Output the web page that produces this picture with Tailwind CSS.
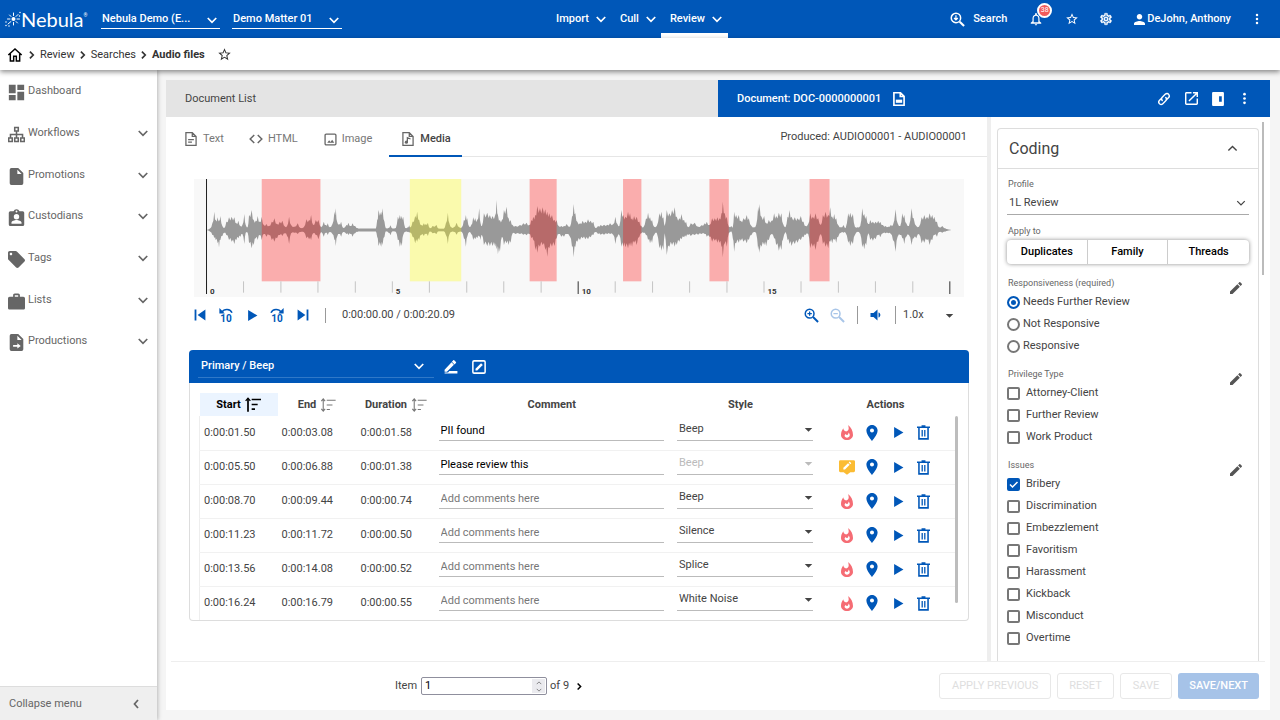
<!DOCTYPE html>
<html lang="en">
<head>
<meta charset="utf-8">
<meta name="viewport" content="width=device-width, initial-scale=1">
<title>Nebula - Audio files</title>
<script src="https://cdn.jsdelivr.net/npm/@tailwindcss/browser@4"></script>
</head>
<body class="flex h-screen min-h-[720px] flex-col overflow-hidden bg-[#f5f5f5] font-[Roboto,sans-serif] text-[11px] leading-4 text-[#444]">

<svg class="hidden" aria-hidden="true">
  <symbol id="down" viewBox="0 0 24 24"><path d="M3.500 8l8.500 8.500L20.500 8" fill="none" stroke="currentColor" stroke-width="3.400"/></symbol>
  <symbol id="down-thin" viewBox="0 0 24 24"><path d="M3 7.500l9 9 9-9" fill="none" stroke="currentColor" stroke-width="3"/></symbol>
  <symbol id="up" viewBox="0 0 24 24"><path d="M3 16.500l9-9 9 9" fill="none" stroke="currentColor" stroke-width="3"/></symbol>
  <symbol id="right" viewBox="0 0 24 24"><path d="M7 4l8 8-8 8" fill="none" stroke="currentColor" stroke-width="4"/></symbol>
  <symbol id="left" viewBox="0 0 24 24"><path d="M16 4l-7 8 7 8" fill="none" stroke="currentColor" stroke-width="3.500"/></symbol>
  <symbol id="caret" viewBox="0 0 24 24"><path d="M2 8h20L12 18z" fill="currentColor"/></symbol>
  <symbol id="home" viewBox="0 0 24 24"><path d="M2 12L12 3l10 9M5 10v11h5v-7h4v7h5V10" fill="none" stroke="currentColor" stroke-width="2.200"/></symbol>
  <symbol id="star" viewBox="0 0 24 24"><path d="M22 9.240l-7.190-.620L12 2 9.190 8.630 2 9.240l5.460 4.730L5.820 21 12 17.270 18.180 21l-1.630-7.030L22 9.240zM12 15.400l-3.760 2.270 1-4.280-3.320-2.880 4.380-.380L12 6.100l1.710 4.040 4.380.380-3.320 2.880 1 4.280L12 15.400z" fill="currentColor"/></symbol>
  <symbol id="bell" viewBox="0 0 24 24"><path d="M12 23c1.100 0 2-.9 2-2h-4c0 1.100.9 2 2 2zm6-7v-5c0-3.070-1.630-5.640-4.500-6.320V3c0-.83-.67-1.500-1.500-1.500s-1.500.67-1.500 1.500v1.680C7.640 5.360 6 7.920 6 11v5l-3 2.500V20h18v-1.500L18 16zm-2 1.500H8V11c0-2.480 1.510-4.500 4-4.500s4 2.020 4 4.500v6.500z" fill="currentColor"/></symbol>
  <symbol id="cog" viewBox="0 0 24 24"><path fill="currentColor" stroke="currentColor" stroke-width=".6" d="M12,8A4,4 0 0,1 16,12A4,4 0 0,1 12,16A4,4 0 0,1 8,12A4,4 0 0,1 12,8M12,10A2,2 0 0,0 10,12A2,2 0 0,0 12,14A2,2 0 0,0 14,12A2,2 0 0,0 12,10M10,22C9.750,22 9.540,21.820 9.500,21.580L9.130,18.930C8.500,18.680 7.960,18.340 7.440,17.940L4.950,18.950C4.730,19.030 4.460,18.950 4.340,18.730L2.340,15.270C2.210,15.050 2.270,14.780 2.460,14.630L4.570,12.970L4.500,12L4.570,11L2.460,9.370C2.270,9.220 2.210,8.950 2.340,8.730L4.340,5.270C4.460,5.050 4.730,4.960 4.950,5.050L7.440,6.050C7.960,5.660 8.500,5.320 9.130,5.070L9.500,2.420C9.540,2.180 9.750,2 10,2H14C14.250,2 14.460,2.180 14.500,2.420L14.870,5.070C15.500,5.320 16.040,5.660 16.560,6.050L19.050,5.050C19.270,4.960 19.540,5.050 19.660,5.270L21.660,8.730C21.790,8.950 21.730,9.220 21.540,9.370L19.430,11L19.500,12L19.430,13L21.540,14.630C21.730,14.780 21.790,15.050 21.660,15.270L19.660,18.730C19.540,18.950 19.270,19.040 19.050,18.950L16.560,17.950C16.040,18.340 15.500,18.680 14.870,18.930L14.500,21.580C14.460,21.820 14.250,22 14,22H10M11.250,4L10.880,6.610C9.680,6.860 8.620,7.500 7.850,8.390L5.440,7.350L4.690,8.650L6.800,10.200C6.400,11.370 6.400,12.640 6.800,13.800L4.680,15.360L5.430,16.660L7.860,15.620C8.630,16.500 9.680,17.140 10.870,17.380L11.240,20H12.760L13.130,17.390C14.320,17.140 15.370,16.500 16.140,15.620L18.570,16.660L19.320,15.360L17.200,13.810C17.600,12.640 17.600,11.370 17.200,10.200L19.310,8.650L18.560,7.350L16.150,8.390C15.380,7.500 14.320,6.860 13.120,6.620L12.750,4H11.250Z"/></symbol>
  <symbol id="person" viewBox="4 4 16 16"><path d="M12 12c2.210 0 4-1.790 4-4s-1.790-4-4-4-4 1.790-4 4 1.790 4 4 4zm0 2c-2.670 0-8 1.340-8 4v2h16v-2c0-2.660-5.330-4-8-4z" fill="currentColor"/></symbol>
  <symbol id="dots" viewBox="0 0 24 24"><g fill="currentColor"><circle cx="12" cy="4" r="2.500"/><circle cx="12" cy="12" r="2.500"/><circle cx="12" cy="20" r="2.500"/></g></symbol>
  <symbol id="find" viewBox="0 0 24 24"><g fill="none" stroke="currentColor"><circle cx="9.500" cy="9.500" r="7.500" stroke-width="2.400"/><path d="M15.500 15.500l7 7" stroke-width="3.400"/><path d="M9.500 5v7M6.500 9.500l3 3 3-3" stroke-width="2"/></g></symbol>
  <symbol id="zoom-in" viewBox="0 0 24 24"><g fill="none" stroke="currentColor"><circle cx="9" cy="9" r="7" stroke-width="2.400"/><path d="M14.500 14.500l8 8" stroke-width="3.200"/><path d="M9 5.500v7M5.500 9h7" stroke-width="2"/></g></symbol>
  <symbol id="zoom-out" viewBox="0 0 24 24"><g fill="none" stroke="currentColor"><circle cx="9" cy="9" r="7" stroke-width="2.400"/><path d="M14.500 14.500l8 8" stroke-width="3.200"/><path d="M5.500 9h7" stroke-width="2"/></g></symbol>
  <symbol id="dashboard" viewBox="2 2 20 20"><path d="M3 13h8V3H3v10zm0 8h8v-6H3v6zm10 0h8V11h-8v10zm0-18v6h8V3h-8z" fill="currentColor"/></symbol>
  <symbol id="tree" viewBox="0 0 24 24"><g fill="none" stroke="currentColor" stroke-width="2.200"><path d="M9.500 2h5v5h-5zM1 17h5v5H1zM9.500 17h5v5h-5zM18 17h5v5h-5zM12 7v10M3.500 17v-5h17v5"/></g></symbol>
  <symbol id="file" viewBox="4 2 16 20"><path d="M6 2a2 2 0 0 0-2 2v16a2 2 0 0 0 2 2h12a2 2 0 0 0 2-2V8l-6-6zm7 2l5 5h-5z" fill="currentColor"/></symbol>
  <symbol id="badge" viewBox="2 0 20 22"><path fill-rule="evenodd" fill="currentColor" d="M4 3h4.200a4 4 0 0 1 7.600 0H20a2 2 0 0 1 2 2v15a2 2 0 0 1-2 2H4a2 2 0 0 1-2-2V5a2 2 0 0 1 2-2zm8-1a1.200 1.200 0 1 0 0 2.400A1.200 1.200 0 0 0 12 2zm0 4.500a3.500 3.500 0 1 0 0 7 3.500 3.500 0 0 0 0-7zM5.500 19h13v-1.500c0-2-4.200-3.200-6.500-3.200s-6.500 1.200-6.500 3.200z"/></symbol>
  <symbol id="tag" viewBox="2 2 20 20"><path d="M21.410 11.580l-9-9C12.050 2.220 11.550 2 11 2H4c-1.100 0-2 .9-2 2v7c0 .55.220 1.050.590 1.420l9 9c.36.36.86.580 1.410.580s1.050-.220 1.410-.590l7-7c.370-.36.590-.86.590-1.410s-.230-1.060-.590-1.420zM5.500 7C4.670 7 4 6.330 4 5.500S4.670 4 5.500 4 7 4.670 7 5.500 6.330 7 5.500 7z" fill="currentColor"/></symbol>
  <symbol id="case" viewBox="2 2 20 19"><path d="M20 6h-4V4c0-1.110-.89-2-2-2h-4c-1.110 0-2 .89-2 2v2H4c-1.110 0-2 .89-2 2v11c0 1.110.89 2 2 2h16c1.110 0 2-.89 2-2V8c0-1.110-.89-2-2-2zm-6 0h-4V4h4v2z" fill="currentColor"/></symbol>
  <symbol id="file-out" viewBox="4 2 16 20"><path fill-rule="evenodd" d="M6 2a2 2 0 0 0-2 2v16a2 2 0 0 0 2 2h12a2 2 0 0 0 2-2V8l-6-6zm7 2l5 5h-5zM8 15h5v-2l4 3-4 3v-2H8z" fill="currentColor"/></symbol>
  <symbol id="doc-text" viewBox="3 1 18 22"><g fill="none" stroke="currentColor" stroke-width="2"><path d="M5 2h9l6 6v14H4V2zM14 2v6h6M7.500 13h9M7.500 17h6"/></g></symbol>
  <symbol id="doc-image" viewBox="3 1 18 22"><path d="M5 2h9l6 6v14H4V2zM14 2v6h6" fill="none" stroke="currentColor" stroke-width="2.600"/><path d="M7 13h10v5H7z" fill="currentColor"/></symbol>
  <symbol id="code" viewBox="0 0 24 24"><path d="M9 5l-7 7 7 7M15 5l7 7-7 7" fill="none" stroke="currentColor" stroke-width="2.500"/></symbol>
  <symbol id="image" viewBox="0 0 24 24"><rect x="2" y="2" width="20" height="20" rx="2" fill="none" stroke="currentColor" stroke-width="2.400"/><path d="M6 18l3.500-4.500 2.500 3 3-4 4 5.500z" fill="currentColor"/></symbol>
  <symbol id="doc-music" viewBox="3 1 18 22"><path d="M4 2h10l6 6v14H4zM14 2v6h6M11 17V10l5 2" fill="none" stroke="currentColor" stroke-width="2"/><circle cx="9.500" cy="17" r="2.500" fill="currentColor"/></symbol>
  <symbol id="link" viewBox="0 0 24 24"><g fill="none" stroke="currentColor" stroke-width="2.400" stroke-linecap="round"><path d="M9 14.500c-2-2-1.500-4 0-5.500l5-5c2-2 4.500-2 6 0s1.500 4 0 5.500l-2.500 2.500"/><path d="M15 9.500c2 2 1.500 4 0 5.500l-5 5c-2 2-4.500 2-6 0s-1.500-4 0-5.500L6.500 12"/></g></symbol>
  <symbol id="open" viewBox="3 3 18 18"><path d="M19 19H5V5h7V3H5c-1.110 0-2 .9-2 2v14c0 1.100.89 2 2 2h14c1.100 0 2-.9 2-2v-7h-2v7zM14 3v2h3.590l-9.830 9.830 1.410 1.410L19 6.410V10h2V3h-7z" fill="currentColor"/></symbol>
  <symbol id="pane" viewBox="0 0 22 26"><path fill-rule="evenodd" d="M2 0h18a2 2 0 0 1 2 2v22a2 2 0 0 1-2 2H2a2 2 0 0 1-2-2V2a2 2 0 0 1 2-2zm11 8v10h5V8z" fill="currentColor"/></symbol>
  <symbol id="prev" viewBox="0 0 20 20"><path d="M1 1h3v18H1zM19 1v18L6 10z" fill="currentColor"/></symbol>
  <symbol id="next" viewBox="0 0 20 20"><path d="M16 1h3v18h-3zM1 1v18l13-9z" fill="currentColor"/></symbol>
  <symbol id="play" viewBox="0 0 20 20"><path d="M2 0v20l17-10z" fill="currentColor"/></symbol>
  <symbol id="arc-back" viewBox="0 0 24 10"><path d="M5 7c4-6 14-6 17 1" fill="none" stroke="currentColor" stroke-width="2.600"/><path d="M1 0v9h9z" fill="currentColor"/></symbol>
  <symbol id="arc-fwd" viewBox="0 0 24 10"><path d="M19 7C15 1 5 1 2 8" fill="none" stroke="currentColor" stroke-width="2.600"/><path d="M23 0v9h-9z" fill="currentColor"/></symbol>
  <symbol id="speaker" viewBox="0 0 24 24"><path d="M1 8v8h6l8 7V1L7 8zM17 7v10c5-1 5-9 0-10z" fill="currentColor"/></symbol>
  <symbol id="edit-line" viewBox="0 0 24 24"><path d="M1 16.500V20h4l12-12-4-4zM20.500 5c.5-.5.500-1 0-1.500L17.500.5c-.5-.5-1-.5-1.500 0l-2.500 2.500L18 7.500zM9 19h14v4H1v-1.500h6z" fill="currentColor"/></symbol>
  <symbol id="edit-box" viewBox="0 0 24 24"><rect x="1.500" y="1.500" width="21" height="21" rx="2" fill="none" stroke="currentColor" stroke-width="2.600"/><path d="M6 18v-3l9.500-9.500 3 3L9 18z" fill="currentColor"/></symbol>
  <symbol id="sort" viewBox="0 0 24 22"><g fill="none" stroke="currentColor"><path d="M4.500 2v20" stroke-width="2.600"/><path d="M1 5.500l3.500-4 3.500 4" stroke-width="2"/><path d="M10 3.500h14M10 11h9M10 18h5" stroke-width="2.400"/></g></symbol>
  <symbol id="sort-both" viewBox="0 0 24 22"><g fill="none" stroke="currentColor"><path d="M4.500 2v18M1.500 5l3-3.500 3 3.500M1.500 17l3 3.500 3-3.500" stroke-width="1.700"/><path d="M10 3.500h14M10 11h9M10 18h5" stroke-width="1.700"/></g></symbol>
  <symbol id="fire" viewBox="4 .67 16 20"><path fill-rule="evenodd" d="M13.500.67s.740 2.650.740 4.800c0 2.060-1.350 3.730-3.410 3.730-2.070 0-3.630-1.670-3.630-3.730l.030-.36C5.210 7.510 4 10.620 4 14c0 3.900 3.580 6.670 8 6.670s8-2.770 8-6.670C20 8.610 17.410 3.800 13.500.67zM12 17.600c-1.900 0-3.200-1-3.200-2.500 0-1.200.8-2 1.900-2.400 0 1.300 1.100 1.900 2.200 1.100.9-.7 1.200-1.700 1.100-3 1.300 1.200 1.900 2.500 1.600 3.900-.4 1.800-1.800 2.900-3.600 2.900z" fill="currentColor"/></symbol>
  <symbol id="comment-edit" viewBox="0 0 24 22"><path d="M2 0h20a2 2 0 0 1 2 2v14a2 2 0 0 1-2 2h-5l-5 4-5-4H2a2 2 0 0 1-2-2V2a2 2 0 0 1 2-2z" fill="#fbbc33"/><path d="M6.500 14v-2.500l7-7 2.500 2.500-7 7zM14.500 3.500L16 2l2.500 2.500L17 6z" fill="#fff"/></symbol>
  <symbol id="pin" viewBox="5 2 14 20"><path d="M12 2C8.130 2 5 5.130 5 9c0 5.250 7 13 7 13s7-7.750 7-13c0-3.870-3.130-7-7-7zm0 9.500c-1.380 0-2.500-1.120-2.500-2.500s1.120-2.500 2.500-2.500 2.500 1.120 2.500 2.500-1.120 2.500-2.500 2.500z" fill="currentColor"/></symbol>
  <symbol id="trash" viewBox="0 0 20 22"><g fill="none" stroke="currentColor" stroke-width="2.400"><path d="M0 3h20M7 1.200h6M3 3v17.800h14V3"/><path d="M8 7v10M12 7v10" stroke-width="2"/></g></symbol>
  <symbol id="pencil" viewBox="3 3 18 18"><path d="M3 17.250V21h3.750L17.810 9.940l-3.750-3.750L3 17.250zM20.710 7.040c.390-.390.390-1.020 0-1.410l-2.340-2.340c-.390-.390-1.020-.390-1.410 0l-1.830 1.830 3.750 3.750 1.830-1.830z" fill="currentColor"/></symbol>
</svg>

<header class="flex h-[38px] shrink-0 items-center bg-[#0057b8] text-white">
  <div class="flex h-full flex-1 items-center">
    <a href="#" class="ml-[5px] flex w-[84px] items-center" aria-label="Nebula home">
      <svg class="size-4 shrink-0" viewBox="0 0 32 32" fill="currentColor"><circle cx="17" cy="16" r="4"/><g stroke="currentColor" stroke-width="2" stroke-linecap="round"><path d="M17 9V4M17 23v5M24 16h5M10 16H5M22 11l4-4M12 21l-6 5M12 11L9 8M22 21l3 3"/></g><circle cx="2" cy="29" r="1.500"/><circle cx="2" cy="22" r="1.500"/><circle cx="8" cy="30" r="1.500"/><circle cx="30" cy="3" r="1.500"/><circle cx="29" cy="10" r="1.500"/></svg>
      <span class="font-[Lato,sans-serif] text-[20px] leading-6">Nebula</span><span class="mb-2 text-[5px]">®</span>
    </a>
    <div class="relative ml-3 w-[119px] border-b border-white">
      <select aria-label="Workspace" class="block h-[19px] w-full appearance-none truncate pl-px pr-5 font-medium"><option>Nebula Demo (E...</option></select>
      <svg class="pointer-events-none absolute right-[2px] top-[5px] size-3"><use href="#down"/></svg>
    </div>
    <div class="relative ml-3 w-[110px] border-b border-white">
      <select aria-label="Matter" class="block h-[19px] w-full appearance-none truncate pl-px pr-5 font-medium"><option>Demo Matter 01</option></select>
      <svg class="pointer-events-none absolute right-[2px] top-[5px] size-3"><use href="#down"/></svg>
    </div>
  </div>
  <nav class="mr-[5px] flex h-full font-medium">
    <a href="#" class="flex items-center gap-[6px] pl-[9px] pr-1">Import<svg class="size-3"><use href="#down"/></svg></a>
    <a href="#" class="flex items-center gap-[6px] pl-[9px] pr-1">Cull<svg class="size-3"><use href="#down"/></svg></a>
    <a href="#" class="flex items-center gap-[6px] border-b-[5px] border-white pl-[9px] pr-[5px] pt-[5px]" aria-current="page">Review<svg class="size-3"><use href="#down"/></svg></a>
  </nav>
  <div class="flex h-full flex-1 items-center justify-end">
    <button class="flex items-center gap-2 font-medium"><svg class="size-[15px]"><use href="#find"/></svg>Search</button>
    <button class="relative ml-[22px]" aria-label="Notifications"><svg class="size-[14px]"><use href="#bell"/></svg><span class="absolute -right-[9px] -top-[9px] flex size-[15px] items-center justify-center rounded-full border-2 border-white bg-[#f25c5c] text-[7px] leading-none">38</span></button>
    <button class="ml-[22px]" aria-label="Favorites"><svg class="size-[14px]"><use href="#star"/></svg></button>
    <button class="ml-5" aria-label="Settings"><svg class="size-[14px]"><use href="#cog"/></svg></button>
    <button class="ml-[21px] flex items-center gap-[2px] font-medium"><svg class="size-[11px]"><use href="#person"/></svg>DeJohn, Anthony</button>
    <button class="ml-5 mr-[17px]" aria-label="More"><svg class="size-[12px]"><use href="#dots"/></svg></button>
  </div>
</header>

<nav class="relative z-10 flex h-8 shrink-0 items-center bg-white pl-[7px] pb-px pt-[2px] text-[#333] shadow-[0_2px_5px_rgba(0,0,0,0.45)]" aria-label="Breadcrumb">
  <a href="#" aria-label="Home"><svg class="size-4 text-black"><use href="#home"/></svg></a>
  <svg class="ml-1 mr-[3px] size-[10px]"><use href="#right"/></svg><a href="#">Review</a>
  <svg class="mx-[3px] size-[10px]"><use href="#right"/></svg><a href="#">Searches</a>
  <svg class="mx-[3px] size-[10px]"><use href="#right"/></svg><a href="#" class="font-bold">Audio files</a>
  <button class="ml-3" aria-label="Add to favorites"><svg class="size-[15px]"><use href="#star"/></svg></button>
</nav>

<div class="flex min-h-0 flex-1">
  <aside class="flex w-[157px] shrink-0 flex-col bg-white text-[#666] shadow-[1px_0_4px_rgba(0,0,0,0.25)]">
    <nav id="menu" class="flex-1"></nav>
    <button class="flex h-[34px] items-center justify-between border-t border-[#ddd] bg-[#efefef] pl-[9px] pr-[15px] pt-px">Collapse menu<svg class="size-3"><use href="#left"/></svg></button>
  </aside>

  <main class="mb-[10px] ml-[9px] mr-[10px] mt-[10px] flex min-w-0 flex-1 flex-col bg-white">
    <div class="flex h-[37px] shrink-0">
      <button class="flex flex-1 items-center bg-[#e4e4e4] px-[19px]">Document List</button>
      <div class="flex flex-1 items-center bg-[#0057b8] pl-[19px] pr-[19px] text-white">
        <span class="font-medium">Document: DOC-0000000001</span>
        <svg class="ml-3 h-[14px] w-3"><use href="#doc-image"/></svg>
        <div class="ml-auto flex items-center gap-[14px]">
          <button aria-label="Copy link"><svg class="size-[14px]"><use href="#link"/></svg></button>
          <button aria-label="Open in new window"><svg class="size-[13px]"><use href="#open"/></svg></button>
          <button aria-label="Toggle coding pane"><svg class="h-[14px] w-3"><use href="#pane"/></svg></button>
          <button aria-label="More options"><svg class="size-[13px]"><use href="#dots"/></svg></button>
        </div>
      </div>
    </div>

    <div class="flex min-h-0 flex-1">
      <section class="flex min-w-0 flex-1 flex-col overflow-hidden">
        <div class="flex h-10 shrink-0 pl-[6px]" role="tablist">
          <button role="tab" class="flex items-center gap-[6px] px-[13px] pt-1 text-[#777]"><svg class="h-[14px] w-3 text-[#666]"><use href="#doc-text"/></svg>Text</button>
          <button role="tab" class="flex items-center gap-[5px] px-3 pt-1 text-[#777]"><svg class="size-[14px] text-[#666]"><use href="#code"/></svg>HTML</button>
          <button role="tab" class="flex items-center gap-[5px] px-[14px] pt-1 text-[#777]"><svg class="size-[13px] text-[#666]"><use href="#image"/></svg>Image</button>
          <button role="tab" aria-selected="true" class="ml-[3px] flex items-center gap-[6px] border-b-2 border-[#0057b8] pl-[13px] pr-[11px] pt-[6px] font-medium"><svg class="h-[14px] w-3 text-[#666]"><use href="#doc-music"/></svg>Media</button>
          <div class="flex flex-1 items-center justify-end border-b border-[#e6e6e6] pr-5">Produced: AUDIO00001 - AUDIO00001</div>
        </div>

        <div class="relative ml-[28px] mr-[23px] mt-[22px] h-[118px] shrink-0 bg-[#f8f8f8]">
          <svg id="wave" class="block h-full w-full" viewBox="73 177 2308 354" preserveAspectRatio="none"></svg>
          <div id="labels" class="text-[8px] font-bold leading-none text-[#333]"></div>
        </div>

        <div class="ml-[28px] mr-[23px] mt-[6px] flex h-6 shrink-0 items-center text-[#0057b8]">
          <button aria-label="To start"><svg class="size-3"><use href="#prev"/></svg></button>
          <button aria-label="Back 10 seconds" class="ml-3 flex w-4 flex-col items-center"><svg class="h-[6px] w-4"><use href="#arc-back"/></svg><span class="text-[10px] font-bold leading-[9px]">10</span></button>
          <button aria-label="Play" class="ml-[13px]"><svg class="size-[11px]"><use href="#play"/></svg></button>
          <button aria-label="Forward 10 seconds" class="ml-[11px] flex w-4 flex-col items-center"><svg class="h-[6px] w-4"><use href="#arc-fwd"/></svg><span class="text-[10px] font-bold leading-[9px]">10</span></button>
          <button aria-label="To end" class="ml-[12px]"><svg class="size-3"><use href="#next"/></svg></button>
          <span class="ml-4 h-[15px] w-px bg-[#999]"></span>
          <span class="ml-4 text-[#444]">0:00:00.00 / 0:00:20.09</span>
          <button aria-label="Zoom in" class="ml-auto"><svg class="size-[15px]"><use href="#zoom-in"/></svg></button>
          <button aria-label="Zoom out" class="ml-[11px] text-[#a8c5e8]" disabled><svg class="size-[15px]"><use href="#zoom-out"/></svg></button>
          <span class="ml-3 h-[18px] w-px bg-[#999]"></span>
          <button aria-label="Volume" class="ml-3"><svg class="size-3"><use href="#speaker"/></svg></button>
          <span class="ml-[13px] h-[18px] w-px bg-[#999]"></span>
          <span class="relative ml-[7px] w-[61px] text-[#444]"><select aria-label="Speed" class="block w-full appearance-none pr-4"><option>1.0x</option></select><svg class="pointer-events-none absolute right-[10px] top-1 size-[9px]"><use href="#caret"/></svg></span>
        </div>

        <div class="ml-[23px] mr-[18px] mt-[23px] shrink-0 rounded-sm border border-t-0 border-[#ddd]">
          <div class="-mx-px flex h-[33px] items-center rounded-t-sm bg-[#0057b8] pl-[9px] text-white">
            <div class="relative w-[236px] border-b border-[#2f78c8]">
              <select aria-label="Redaction set" class="block h-[21px] w-full appearance-none pb-px pl-[3px] font-medium"><option>Primary / Beep</option></select>
              <svg class="pointer-events-none absolute right-[9px] top-1 size-3"><use href="#down"/></svg>
            </div>
            <button aria-label="Edit" class="ml-[10px]"><svg class="size-[14px]"><use href="#edit-line"/></svg></button>
            <button aria-label="Edit set" class="ml-[14px]"><svg class="size-[14px]"><use href="#edit-box"/></svg></button>
          </div>
          <div class="relative ml-[9px] mr-[10px] mt-[10px]">
            <table class="w-full table-fixed border-collapse">
              <colgroup><col class="w-[78px]"><col class="w-[79px]"><col class="w-[79px]"><col><col class="w-[145px]"><col class="w-[145px]"></colgroup>
              <thead>
                <tr class="h-[23px]">
                  <th class="bg-[#ebf4ff] p-0 text-black"><button class="mx-auto flex items-center gap-1">Start<svg class="h-[15px] w-4"><use href="#sort"/></svg></button></th>
                  <th class="p-0"><button class="mx-auto flex items-center gap-1">End<svg class="h-[14px] w-4 text-[#777]"><use href="#sort-both"/></svg></button></th>
                  <th class="p-0"><button class="mx-auto flex items-center gap-1">Duration<svg class="h-[14px] w-4 text-[#777]"><use href="#sort-both"/></svg></button></th>
                  <th class="p-0">Comment</th><th class="p-0">Style</th><th class="p-0">Actions</th>
                </tr>
              </thead>
              <tbody id="rows" class="border-l border-[#eee]"></tbody>
            </table>
            <span class="absolute right-0 top-[23px] h-[187px] w-[3px] rounded bg-[#bdbdbd]"></span>
          </div>
        </div>
      </section>

      <section class="relative w-[283px] shrink-0 overflow-hidden border-l-4 border-[#eee] pl-[6px] pr-[11px] pt-[11px]">
        <div class="h-full rounded-t-sm border border-b-0 border-[#ddd]">
          <div class="flex h-10 items-center justify-between border-b border-[#ddd] pl-[11px] pr-5"><h2 class="text-base">Coding</h2><button aria-label="Collapse coding"><svg class="size-[11px]"><use href="#up"/></svg></button></div>
          <div class="px-[9px] pt-[7px]">
            <label for="profile" class="block px-px text-[9px] leading-4 text-[#666]">Profile</label>
            <div class="relative border-b border-[#aaa]">
              <select id="profile" class="block h-[22px] w-full appearance-none pl-[2px]"><option>1L Review</option></select>
              <svg class="pointer-events-none absolute right-[3px] top-[6px] size-[10px]"><use href="#down-thin"/></svg>
            </div>
            <div class="mt-2 px-px text-[9px] leading-4 text-[#666]">Apply to</div>
            <div class="mt-px grid grid-cols-3 divide-x divide-[#ccc] rounded-sm font-medium text-black shadow-[0_0_4px_rgba(0,0,0,0.45)]">
              <button class="h-6">Duplicates</button><button class="h-6">Family</button><button class="h-6">Threads</button>
            </div>
            <div id="groups" class="pt-3"></div>
          </div>
        </div>
        <span class="absolute right-[6px] top-[5px] h-[153px] w-[2px] bg-[#bbb]"></span>
      </section>
    </div>

    <footer class="mx-[5px] flex h-[49px] shrink-0 items-center border-t border-[#eee] pr-[6px]">
      <div class="flex flex-1 items-center pl-[224px]">
        <label for="item" class="mr-1">Item</label>
        <span class="flex h-[18px] w-[126px] rounded-xs border border-[#8f8f9d] bg-white p-px">
          <input id="item" type="number" value="1" class="min-w-0 flex-1 appearance-none pl-[2px] text-black [-moz-appearance:textfield] [&::-webkit-inner-spin-button]:appearance-none">
          <span class="flex w-[13px] flex-col items-center justify-center gap-px bg-[#ebebef] text-[#666]">
            <button aria-label="Increase"><svg class="block size-[6px]"><use href="#up"/></svg></button>
            <button aria-label="Decrease"><svg class="block size-[6px]"><use href="#down-thin"/></svg></button>
          </span>
        </span>
        <span class="ml-[3px]">of 9</span>
        <button aria-label="Next item" class="ml-[6px]"><svg class="size-[9px] text-black"><use href="#right"/></svg></button>
      </div>
      <div class="flex gap-[6px] text-[#dedede]">
        <button class="h-[26px] rounded-[3px] border border-[#e8e8e8] px-3" disabled>APPLY PREVIOUS</button>
        <button class="h-[26px] rounded-[3px] border border-[#e8e8e8] px-[11px]" disabled>RESET</button>
        <button class="h-[26px] rounded-[3px] border border-[#e8e8e8] px-3" disabled>SAVE</button>
        <button class="h-[26px] rounded-[3px] bg-[#a6c3e8] px-[11px] font-medium text-white">SAVE/NEXT</button>
      </div>
    </footer>
  </main>
</div>

<script>
const icon = (id, cls) => `<svg class="${cls}"><use href="#${id}"/></svg>`;

// Side menu
document.getElementById('menu').innerHTML = [
  ['Dashboard','dashboard'],['Workflows','tree'],['Promotions','file'],['Custodians','badge'],
  ['Tags','tag'],['Lists','case'],['Productions','file-out']
].map(([name, id], i) => `<a href="#" class="flex h-[42px] items-center px-2 nth-[3n]:-mb-px">${icon(id, 'mt-[2px] mr-[3px] size-[17px] shrink-0')}<span class="flex-1">${name}</span>${i ? icon('down', 'size-3') : ''}</a>`).join('');

// Regions with their comments
document.getElementById('rows').innerHTML = [
  ['0:00:01.50','0:00:03.08','0:00:01.58','PII found','Beep'],
  ['0:00:05.50','0:00:06.88','0:00:01.38','Please review this','Beep'],
  ['0:00:08.70','0:00:09.44','0:00:00.74','','Beep'],
  ['0:00:11.23','0:00:11.72','0:00:00.50','','Silence'],
  ['0:00:13.56','0:00:14.08','0:00:00.52','','Splice'],
  ['0:00:16.24','0:00:16.79','0:00:00.55','','White Noise']
].map(([a, b, c, text, style], i) => {
  const note = i === 1;
  return `<tr class="h-[34px] border-b border-[#f1f1f1] last:border-0">
    <td class="p-0 pl-1">${a}</td><td class="p-0 pl-1">${b}</td><td class="p-0 pl-1">${c}</td>
    <td class="py-0 pl-[3px] pr-1"><input aria-label="Comment ${i + 1}" value="${text}" placeholder="Add comments here" class="mb-1 block h-5 w-full border-b border-[#bbb] pl-[2px] text-black placeholder:text-[#777]"></td>
    <td class="p-0 pl-[9px]"><div class="relative mb-1"><select aria-label="Style ${i + 1}" ${note ? 'disabled' : ''} class="block h-5 w-full appearance-none border-b border-[#bbb] pb-[3px] pl-[2px] disabled:text-[#bbb] disabled:opacity-100"><option>${style}</option></select>${icon('caret', note ? 'pointer-events-none absolute right-0 top-1 size-[9px] text-[#bbb]' : 'pointer-events-none absolute right-0 top-1 size-[9px]')}</div></td>
    <td class="p-0 pl-[25px]"><div class="flex items-center text-[#0057b8]">
      <button aria-label="Apply" class="flex w-[18px] justify-center text-[#f56c74]">${note ? icon('comment-edit', 'h-[15px] w-4') : icon('fire', 'h-[15px] w-3')}</button>
      <button aria-label="Locate" class="ml-[10px] flex w-3 justify-center">${icon('pin', 'h-4 w-3')}</button>
      <button aria-label="Play region" class="ml-[15px]">${icon('play', 'size-[11px]')}</button>
      <button aria-label="Delete" class="ml-[13px]">${icon('trash', 'h-[15px] w-[13px]')}</button>
    </div></td></tr>`;
}).join('');

// Coding fields
document.getElementById('groups').innerHTML = [
  ['Responsiveness (required)','radio',['Needs Further Review','Not Responsive','Responsive']],
  ['Privilege Type','checkbox',['Attorney-Client','Further Review','Work Product']],
  ['Issues','checkbox',['Bribery','Discrimination','Embezzlement','Favoritism','Harassment','Kickback','Misconduct','Overtime']]
].map(([title, type, opts], g) => `<fieldset class="relative mb-[10px]">
  <legend class="block px-px text-[9px] leading-[15px] text-[#666]">${title}</legend>
  <button aria-label="Edit ${title}" class="absolute right-[7px] -top-[9px] text-[#555]">${icon('pencil', 'size-3')}</button>
  ${opts.map((o, i) => {
    const on = i === 0 && g !== 1 ? 'checked' : '';
    return type === 'radio'
    ? `<label class="flex h-[22px] items-center gap-[3px]"><input type="radio" name="g${g}" ${on} class="size-[13px] appearance-none rounded-full border-2 border-[#777] checked:border-[#0057b8] checked:bg-[#0057b8] checked:shadow-[inset_0_0_0_2px_white]">${o}</label>`
    : `<label class="flex h-[22px] items-center"><span class="relative mr-[6px] size-[13px]"><input type="checkbox" ${on} class="peer block size-[13px] appearance-none rounded-xs border-2 border-[#777] checked:border-[#0057b8] checked:bg-[#0057b8]"><svg viewBox="0 0 13 13" class="pointer-events-none absolute inset-0 hidden peer-checked:block"><path d="M3 6.500l2.500 2.500L10.500 4" fill="none" stroke="#fff" stroke-width="1.500"/></svg></span>${o}</label>`;
  }).join('')}</fieldset>`).join('');

// Waveform envelope: x, height above the axis, height below it
const first = '110,0,0 122,5,5 128,20,15 134,55,25 138,30,30 144,38,40 148,30,52 152,42,30 158,12,18 164,6,8 170,25,15 178,38,30 186,40,35 194,38,42 200,20,30 206,28,25 212,12,20 218,15,12 224,48,42 228,15,8 234,8,8 238,45,40 246,60,55 252,30,45 258,28,25 264,42,30 270,25,15 276,40,30 282,15,12 290,18,20 298,12,15 306,25,30 314,35,35 322,18,25 330,25,15 338,28,18 346,10,10 352,12,18 358,40,42 364,15,10 374,10,8 384,20,12 392,6,6 402,8,6 410,32,25 418,30,28 424,45,30 430,15,10 438,30,15 446,30,28 454,8,6 462,25,20 468,15,8 474,20,15 480,8,6 488,18,12 494,55,30 498,65,48 502,25,20 508,18,12 514,25,20 520,6,6 530,15,12 536,22,15 542,12,12 548,20,20 556,12,10 564,5,5 570,4,4 618,4,4 622,30,20 626,60,48 634,55,50 638,65,45 644,25,20 648,5,3 656,6,8 662,14,16 668,4,3 678,6,5 684,40,30 690,45,50 696,42,48 700,40,15 706,6,5 714,8,6 718,14,8 722,8,8 728,25,20 736,42,40 742,55,35 748,30,30 754,15,15 762,20,18 768,18,12 774,22,18 780,5,4 788,12,10 800,15,12 806,4,3 822,3,3 828,20,15 834,52,42 838,22,15 844,8,6 852,8,5 860,22,14 868,8,5 876,8,6 882,30,25 888,45,50 892,35,20 898,10,6 904,15,12 910,38,30 916,35,28 922,30,25 928,65,20 932,20,30 936,12,15 942,50,45 952,52,48 960,45,48 968,42,48 976,45,50 980,90,58 984,45,72 990,30,65 996,30,20 1002,60,45 1010,70,40 1016,35,45 1022,30,38 1028,15,10 1036,12,12 1050,15,12 1060,20,14 1070,22,16 1078,15,12 1084,30,25 1090,40,30 1096,45,60 1102,72,68 1110,65,50 1118,68,45 1126,62,60 1132,55,80 1138,50,55 1146,45,50 1154,30,48 1160,30,25 1166,12,12 1174,12,20 1182,12,20 1190,18,12';
const second = '30,10,20 36,40,50 41,78,82 46,50,50 52,25,35 60,20,30 68,28,25 76,25,28 84,32,28 92,28,22 100,25,15 106,6,6 114,12,12 122,15,14 132,16,14 142,16,12 150,20,12 160,18,15 166,40,42 172,18,20 178,12,15 184,60,50 190,45,50 196,40,52 204,55,55 210,50,48 216,35,50 222,42,38 230,40,45 238,25,20 244,12,10 250,8,8 258,35,15 264,52,30 270,38,40 276,30,38 282,10,15 290,12,8 298,50,55 304,55,62 310,38,60 314,12,10 320,60,75 328,50,50 336,60,45 344,68,50 350,40,45 358,35,35 364,48,28 372,30,22 378,25,20 384,8,15 392,20,18 404,22,15 414,10,14 424,14,12 434,20,12 440,25,20 448,15,20 456,35,35 464,35,32 472,38,38 478,35,38 484,50,50 488,85,82 494,50,40 500,40,50 506,10,10 514,12,4 518,8,25 522,55,65 528,45,40 536,45,38 542,28,32 550,35,35 560,45,40 566,35,30 574,12,15 582,8,6 588,15,10 594,70,60 598,78,68 604,40,50 612,42,45 618,20,48 626,30,30 634,28,12 642,50,25 648,42,45 656,52,62 664,50,60 668,20,30 676,8,6 682,40,30 688,60,42 694,40,48 704,38,42 712,35,38 722,42,30 730,25,22 736,12,15 744,18,12 750,50,55 758,40,50 766,50,60 774,35,35 782,15,12 788,45,42 796,55,50 804,45,55 810,68,35 816,40,40 822,48,30 828,35,38 834,15,20 842,8,8 850,15,8 856,5,8 864,50,38 870,52,48 878,48,42 884,10,15 892,8,5 900,12,12 906,65,52 912,48,58 918,42,45 924,18,10 930,30,30 938,25,32 946,25,28 954,28,15 960,25,22 968,15,10 976,12,10 984,10,10 992,16,12 998,15,30 1006,62,65 1012,20,20 1020,12,15 1026,50,25 1032,45,42 1038,20,20 1046,12,15 1054,65,45 1060,35,25 1068,12,25 1076,10,12 1084,38,40 1092,45,38 1100,40,30 1108,50,45 1116,45,30 1122,40,15 1130,25,20 1136,8,6 1146,12,8 1156,4,4 1174,0,0';
const parse = (s, dx) => s.split(' ').map(p => p.split(',').map(Number)).map(([x, u, d]) => [x + dx, u, d]);
const peaks = [...parse(first, 0), ...parse(second, 1170)];
// A dip between neighbouring peaks gives the trace its jagged edge
const env = peaks.flatMap(([x, u, d], i) => {
  const n = peaks[i + 1];
  return n && n[0] - x < 20 ? [[x, u, d], [(x + n[0]) / 2, (u + n[1]) * .37, (d + n[2]) * .37]] : [[x, u, d]];
});
const upper = env.map(([x, u]) => `${x},${330 - u}`);
const lower = env.map(([x, , d]) => `${x},${330 + d}`).reverse();
let svg = `<polygon points="${[...upper, ...lower].join(' ')}" fill="#999"/><rect x="122" y="326" width="2205" height="8" fill="#999"/>`;
for (const [x1, x2, c] of [[276,452,'#f00'],[720,874,'#ff0'],[1079,1160,'#f00'],[1359,1414,'#f00'],[1618,1676,'#f00'],[1918,1978,'#f00']])
  svg += `<rect x="${x1}" y="177" width="${x2 - x1}" height="307" fill="${c}" fill-opacity=".3"/>`;
for (let i = 0; i <= 20; i++) {
  const major = i % 10 === 0;
  svg += `<rect x="${Math.round(110 + i * 111.4) - 1}" y="484" width="3" height="${major ? 38 : 34}" fill="${major ? '#333' : '#c4c4c4'}"/>`;
}
svg += '<rect x="109" y="177" width="3" height="345" fill="#222"/>';
document.getElementById('wave').innerHTML = svg;
document.getElementById('labels').innerHTML = [0, 5, 10, 15].map(n =>
  `<span class="absolute bottom-px pl-1" style="left:${(36 + n * 111.4) / 23.08}%">${n}</span>`).join('');
</script>
</body>
</html>
